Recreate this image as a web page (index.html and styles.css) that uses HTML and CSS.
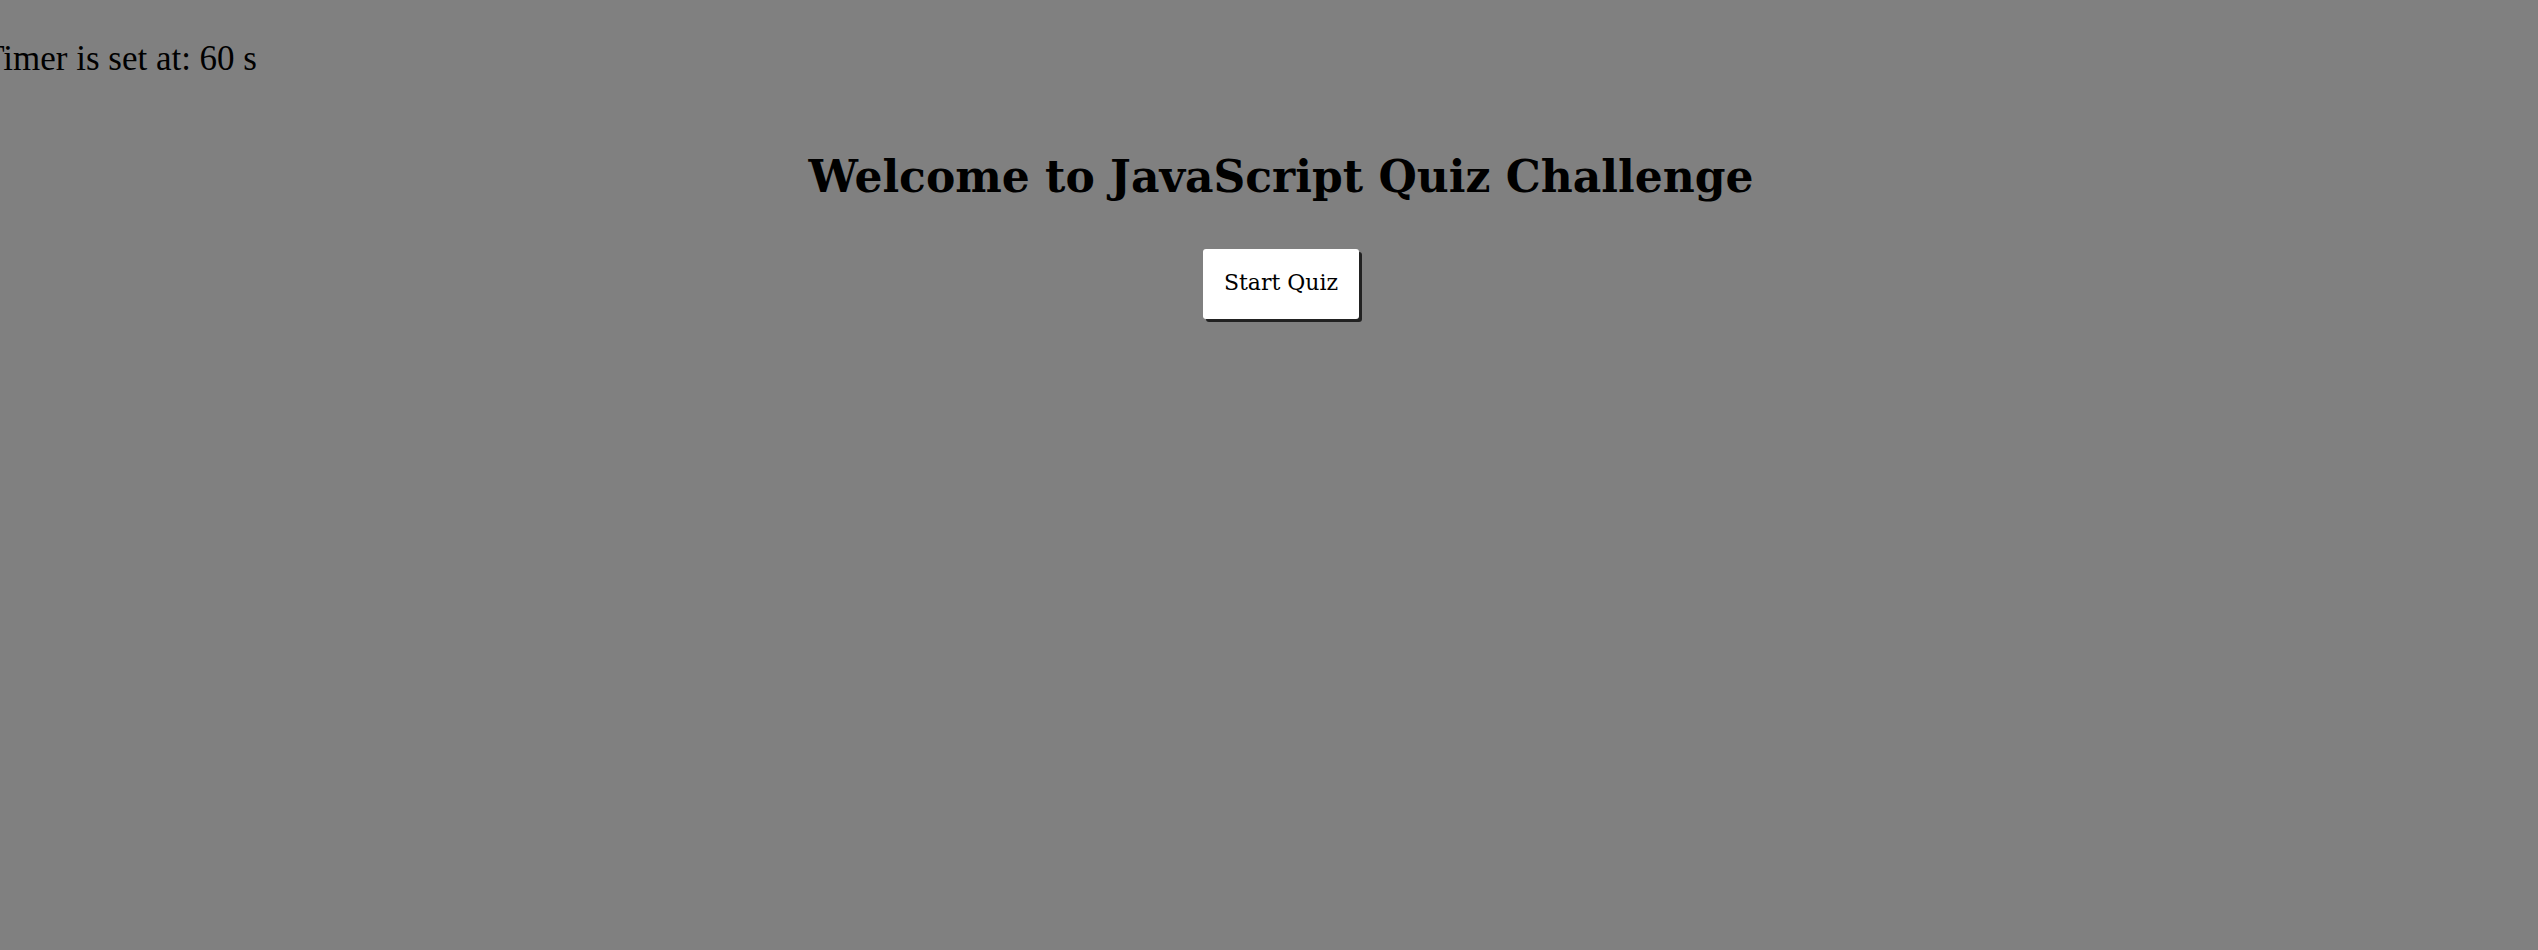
FILE: index.html
```html
<!DOCTYPE html>
<html lang="en">
<head>
<meta charset="utf-8">
<title>JavaScript Quiz Challenge</title>
<link rel="stylesheet" href="styles.css">
</head>
<body>
<header class="top-bar">
  <div class="timer"><span class="timer-text">Timer is set at: 60 s</span></div>
</header>
<main class="start-screen">
  <h1 class="title">Welcome to JavaScript Quiz Challenge</h1>
  <button class="start-btn" type="button">Start Quiz</button>
</main>
</body>
</html>
```

FILE: styles.css
```css
html, body {
  margin: 0;
  padding: 0;
}

body {
  background: #808080;
  color: #000;
  font-family: "DejaVu Serif", Georgia, serif;
  min-height: 950px;
}

.top-bar {
  display: flex;
  padding-top: 39px;
}

.timer {
  width: 257px;
  display: flex;
  justify-content: flex-end;
  white-space: nowrap;
  font-family: "Liberation Serif", Georgia, serif;
  font-size: 35px;
  line-height: 40px;
}

.start-screen {
  display: flex;
  flex-direction: column;
  align-items: center;
  padding-left: 24px;
}

.title {
  margin: 70px 0 44px;
  font-size: 44px;
  line-height: 56px;
  font-weight: bold;
}

.start-btn {
  font-family: inherit;
  font-size: 22px;
  line-height: 28px;
  color: #000;
  background: #fff;
  border: none;
  border-radius: 3px;
  padding: 20px 21px 22px;
  box-shadow: 3px 3px 0 #222;
  cursor: pointer;
}
```
